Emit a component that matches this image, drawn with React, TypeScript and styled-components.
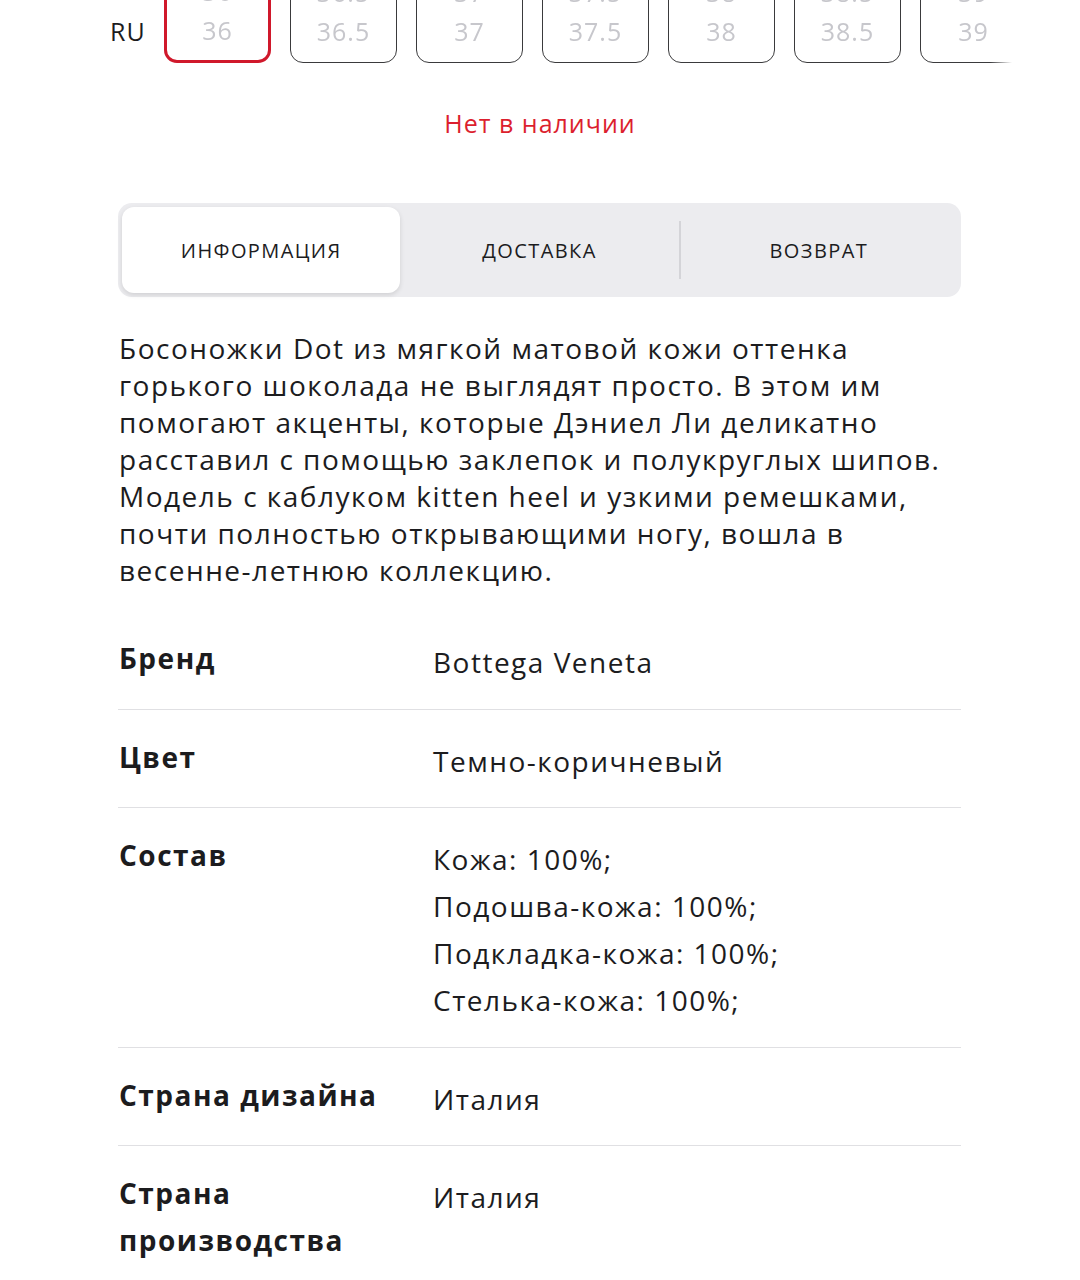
import React from 'react';
import styled, { createGlobalStyle } from 'styled-components';

const GlobalStyle = createGlobalStyle`
  html, body {
    margin: 0;
    padding: 0;
    background: #ffffff;
  }
  body {
    font-family: 'Open Sans', Roboto, 'Liberation Sans', sans-serif;
    color: #1c1c1e;
    overflow: hidden;
  }
`;

interface Size {
  top: string;
  ru: string;
}

const sizes: Size[] = [
  { top: '36', ru: '36' },
  { top: '36.5', ru: '36.5' },
  { top: '37', ru: '37' },
  { top: '37.5', ru: '37.5' },
  { top: '38', ru: '38' },
  { top: '38.5', ru: '38.5' },
  { top: '39', ru: '39' },
];

const tabs = ['Информация', 'Доставка', 'Возврат'];

interface Spec {
  label: string;
  values: string[];
}

const specs: Spec[] = [
  { label: 'Бренд', values: ['Bottega Veneta'] },
  { label: 'Цвет', values: ['Темно-коричневый'] },
  {
    label: 'Состав',
    values: ['Кожа: 100%;', 'Подошва-кожа: 100%;', 'Подкладка-кожа: 100%;', 'Стелька-кожа: 100%;'],
  },
  { label: 'Страна дизайна', values: ['Италия'] },
  { label: 'Страна производства', values: ['Италия'] },
];

const App: React.FC = () => {
  const activeTab = 0;
  const selectedSize = 0;

  return (
    <>
      <GlobalStyle />
      <StyledPage>
        <StyledSizeRow>
          <StyledSizeLabel>RU</StyledSizeLabel>
          <StyledSizeList>
            {sizes.map((size, i) => (
              <StyledSizeBox key={size.ru} selected={i === selectedSize}>
                <StyledSizeValue>{size.top}</StyledSizeValue>
                <StyledSizeValue>{size.ru}</StyledSizeValue>
              </StyledSizeBox>
            ))}
          </StyledSizeList>
        </StyledSizeRow>

        <StyledStock>Нет в наличии</StyledStock>

        <StyledContent>
          <StyledTabs>
            {tabs.map((tab, i) => (
              <StyledTab key={tab} active={i === activeTab} divided={i === 2 && activeTab !== 1}>
                {tab}
              </StyledTab>
            ))}
          </StyledTabs>

          <StyledDescription>
            Босоножки Dot из мягкой матовой кожи оттенка горького шоколада не выглядят просто. В этом им
            помогают акценты, которые Дэниел Ли деликатно расставил с помощью заклепок и полукруглых
            шипов. Модель с каблуком kitten heel и узкими ремешками, почти полностью открывающими ногу,
            вошла в весенне-летнюю коллекцию.
          </StyledDescription>

          <StyledSpecs>
            {specs.map((spec) => (
              <StyledSpecRow key={spec.label}>
                <StyledSpecLabel>{spec.label}</StyledSpecLabel>
                <StyledSpecValues>
                  {spec.values.map((value) => (
                    <div key={value}>{value}</div>
                  ))}
                </StyledSpecValues>
              </StyledSpecRow>
            ))}
          </StyledSpecs>
        </StyledContent>
      </StyledPage>
    </>
  );
};

const StyledPage = styled.div`
  width: 1080px;
  height: 1280px;
  overflow: hidden;
`;

const StyledSizeRow = styled.div`
  display: flex;
  align-items: flex-end;
  padding-left: 110px;
  margin-top: -57px;
`;

const StyledSizeLabel = styled.div`
  font-size: 25px;
  letter-spacing: 1px;
  line-height: 40px;
  color: #1c1c1e;
  width: 54px;
  padding-bottom: 12px;
`;

const StyledSizeList = styled.div`
  display: flex;
  gap: 19px;
  width: 910px;
  overflow: hidden;
  mask-image: linear-gradient(to right, #000 826px, transparent 848px);
`;

const StyledSizeBox = styled.div<{ selected: boolean }>`
  box-sizing: border-box;
  flex: 0 0 107px;
  height: 120px;
  border: ${(props) => (props.selected ? '3px solid #d0182b' : '1.5px solid #3a3a3c')};
  border-radius: 13px;
  display: flex;
  flex-direction: column;
  justify-content: flex-end;
  align-items: center;
  padding-bottom: ${(props) => (props.selected ? '10px' : '11.5px')};
`;

const StyledSizeValue = styled.div`
  font-size: 25px;
  letter-spacing: 1px;
  line-height: 39px;
  color: #c7c7cc;
`;

const StyledStock = styled.div`
  text-align: center;
  color: #dc1f2e;
  font-size: 25px;
  letter-spacing: 1px;
  line-height: 32px;
  margin-top: 44px;
`;

const StyledContent = styled.div`
  padding: 0 119px 0 118px;
  margin-top: 64px;
`;

const StyledTabs = styled.div`
  display: grid;
  grid-template-columns: repeat(3, 1fr);
  background: #ececef;
  border-radius: 14px;
  padding: 4px;
  height: 94px;
  box-sizing: border-box;
`;

const StyledTab = styled.div<{ active: boolean; divided: boolean }>`
  display: flex;
  align-items: center;
  justify-content: center;
  text-transform: uppercase;
  font-size: 20px;
  letter-spacing: 1.4px;
  color: #1c1c1e;
  border-radius: 12px;
  background: ${(props) => (props.active ? '#ffffff' : 'transparent')};
  box-shadow: ${(props) => (props.active ? '0 2px 5px rgba(0, 0, 0, 0.12)' : 'none')};
  border-left: ${(props) => (props.divided ? '2px solid #d4d4d8' : 'none')};
  border-radius: ${(props) => (props.divided ? '0' : '12px')};
  margin: ${(props) => (props.divided ? '14px 0' : '0')};
`;

const StyledDescription = styled.p`
  margin: 33px 0 0 1px;
  font-size: 28px;
  letter-spacing: 1.5px;
  line-height: 37px;
  color: #1c1c1e;
  width: 843px;
`;

const StyledSpecs = styled.div`
  margin-top: 22px;
`;

const StyledSpecRow = styled.div`
  display: grid;
  grid-template-columns: 314px 1fr;
  padding: 28px 0 22.5px 1px;
  font-size: 28px;
  letter-spacing: 1.5px;
  line-height: 47px;
  border-bottom: 1.5px solid #e0e0e3;
  &:last-child {
    border-bottom: none;
  }
`;

const StyledSpecLabel = styled.div`
  font-weight: 700;
  color: #1c1c1e;
  margin-top: -4px;
  padding-right: 40px;
`;

const StyledSpecValues = styled.div`
  color: #1c1c1e;
`;

export default App;
